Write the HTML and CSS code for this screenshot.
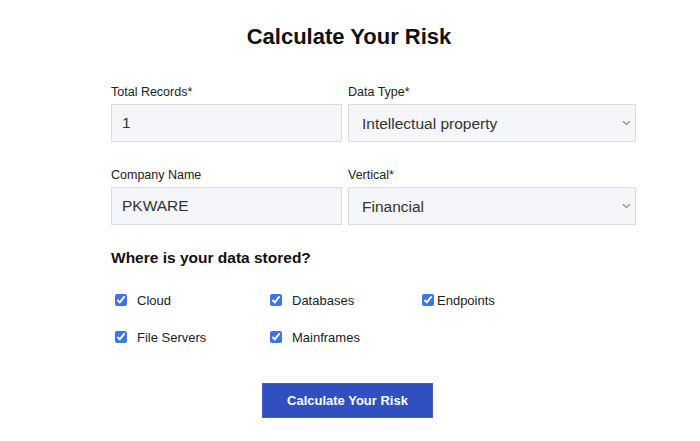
FILE: index.html
```html
<!DOCTYPE html>
<html lang="en">
<head>
<meta charset="utf-8">
<title>Calculate Your Risk</title>
<link rel="stylesheet" href="styles.css">
</head>
<body>
<main class="page">
  <h1 class="title">Calculate Your Risk</h1>
  <form class="form">
    <div class="fields">
      <div class="field">
        <label class="label" for="records">Total Records*</label>
        <input class="control" id="records" type="text" value="1">
      </div>
      <div class="field">
        <label class="label" for="dtype">Data Type*</label>
        <div class="select-wrap">
          <select class="control select" id="dtype">
            <option>Intellectual property</option>
          </select>
          <svg class="chevron" width="9" height="6" viewBox="0 0 9 6"><path d="M1 1.2 L4.5 4.5 L8 1.2" fill="none" stroke="#8a8d92" stroke-width="1.2"/></svg>
        </div>
      </div>
      <div class="field">
        <label class="label" for="company">Company Name</label>
        <input class="control" id="company" type="text" value="PKWARE">
      </div>
      <div class="field">
        <label class="label" for="vertical">Vertical*</label>
        <div class="select-wrap">
          <select class="control select" id="vertical">
            <option>Financial</option>
          </select>
          <svg class="chevron" width="9" height="6" viewBox="0 0 9 6"><path d="M1 1.2 L4.5 4.5 L8 1.2" fill="none" stroke="#8a8d92" stroke-width="1.2"/></svg>
        </div>
      </div>
    </div>

    <h2 class="subtitle">Where is your data stored?</h2>
    <div class="checks">
      <label class="check"><input type="checkbox" checked><span>Cloud</span></label>
      <label class="check"><input type="checkbox" checked><span>Databases</span></label>
      <label class="check check--tight"><input type="checkbox" checked><span>Endpoints</span></label>
      <label class="check"><input type="checkbox" checked><span>File Servers</span></label>
      <label class="check"><input type="checkbox" checked><span>Mainframes</span></label>
    </div>

    <div class="actions">
      <button class="button" type="button">Calculate Your Risk</button>
    </div>
  </form>
</main>
</body>
</html>
```

FILE: styles.css
```css
* { box-sizing: border-box; }

html, body {
  margin: 0;
  padding: 0;
  background: #ffffff;
}

body {
  font-family: "Liberation Sans", Arial, Helvetica, sans-serif;
  color: #1f1f1f;
}

.page {
  width: 700px;
  padding-top: 24px;
}

.title {
  margin: 0;
  font-size: 22px;
  line-height: 26px;
  font-weight: 700;
  color: #111;
  text-align: center;
  padding-right: 2px;
}

.form {
  margin: 34px 0 0 111px;
  width: 525px;
}

.fields {
  display: grid;
  grid-template-columns: 231px 288px;
  column-gap: 6px;
  row-gap: 25px;
}

.field {
  display: flex;
  flex-direction: column;
}

.label {
  font-size: 12.5px;
  line-height: 16px;
  color: #222;
  margin-bottom: 4px;
}

.control {
  height: 38px;
  width: 100%;
  margin: 0;
  border: 1px solid #d9dde3;
  border-radius: 0;
  background: #f4f6f9;
  font-family: "Liberation Sans", Arial, Helvetica, sans-serif;
  font-size: 15.5px;
  color: #333;
  padding: 0 10px;
  outline: none;
}

.select-wrap {
  position: relative;
}

.select {
  appearance: none;
  -webkit-appearance: none;
  padding: 0 13px;
}

.chevron {
  position: absolute;
  right: 5px;
  top: 16px;
  pointer-events: none;
}

.subtitle {
  margin: 23px 0 0 0;
  font-size: 15.5px;
  line-height: 20px;
  font-weight: 700;
  color: #111;
}

.checks {
  margin-top: 22px;
  display: grid;
  grid-template-columns: 155px 156px 156px;
  row-gap: 17px;
}

.check {
  display: flex;
  align-items: center;
  height: 20px;
  font-size: 13px;
  color: #222;
  padding-left: 4px;
}

.check input {
  margin: 0 10px 0 0;
  width: 12px;
  height: 12px;
  accent-color: #3b76e8;
}

.check--tight {
  padding-left: 0;
}

.check--tight input {
  margin-right: 3px;
}

.actions {
  margin-top: 36px;
  width: 525px;
  display: flex;
  justify-content: flex-start;
  padding-left: 151px;
}

.button {
  width: 171px;
  height: 35px;
  border: 1px solid #4060cc;
  background: #3150bf;
  color: #ffffff;
  font-family: "Liberation Sans", Arial, Helvetica, sans-serif;
  font-size: 13px;
  font-weight: 700;
  padding: 0;
  cursor: pointer;
}
```
